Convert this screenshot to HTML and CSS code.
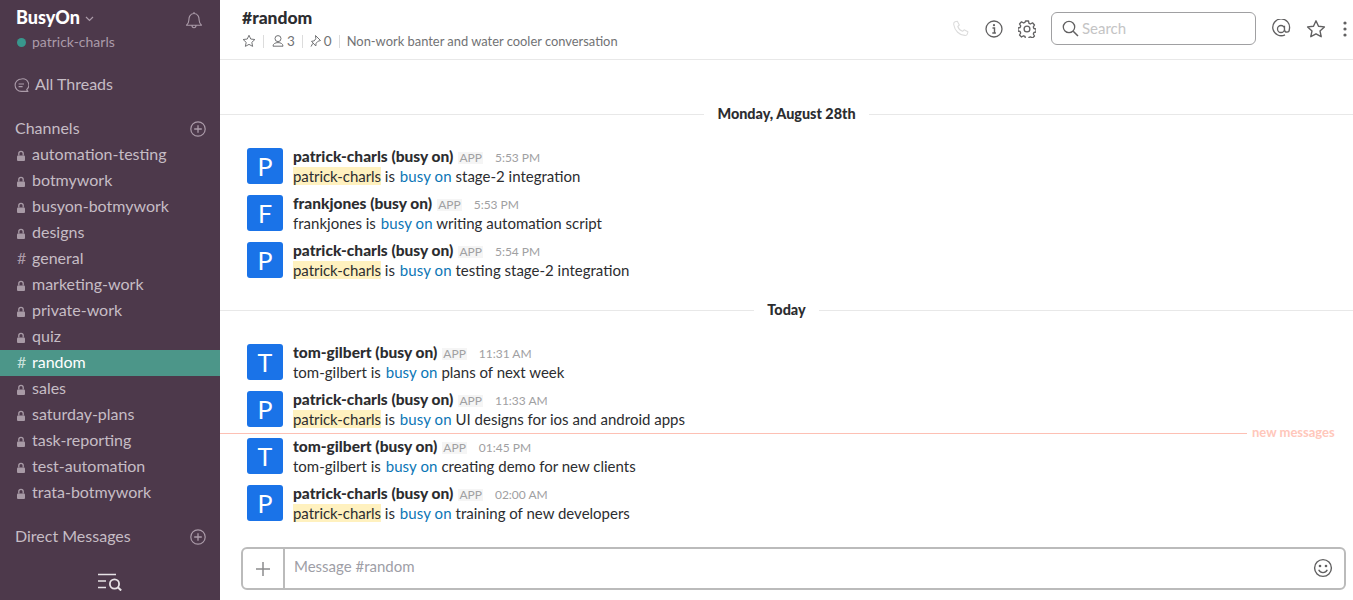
FILE: index.html
```html
<!DOCTYPE html>
<html lang="en">
<head>
<meta charset="utf-8">
<title>#random | BusyOn</title>
<link rel="stylesheet" href="styles.css">
</head>
<body class="page">
<svg class="defs" width="0" height="0" aria-hidden="true">
  <symbol id="lock" viewBox="0 0 10 12"><path d="M1.8 6.5V4.6a2.2 2.2 0 0 1 4.400 0v1.900" fill="none" stroke="currentColor" stroke-width="1.300"/><rect x="0" y="6.500" width="8" height="5.500" rx="1" fill="currentColor"/></symbol>
  <symbol id="plus-circle" viewBox="0 0 16 16"><circle cx="8" cy="8" r="7.200" fill="none" stroke="currentColor" stroke-width="1.200"/><path d="M8 4.200v7.600M4.200 8h7.600" fill="none" stroke="currentColor" stroke-width="1.300"/></symbol>
  <symbol id="star" viewBox="0 0 20 20"><path d="M10 1.800l2.500 5.400 5.900.7-4.400 4 1.200 5.800L10 14.800l-5.200 2.900L6 11.900l-4.400-4 5.900-.7z" fill="none" stroke="currentColor" stroke-width="1.400" stroke-linejoin="round"/></symbol>
</svg>
<div class="app">
  <aside class="sidebar">
    <div class="team">
      <div class="team-text">
        <div class="team-name">BusyOn <svg class="chev" width="9" height="6" viewBox="0 0 9 6"><path d="M1 1l3.500 3.500L8 1" fill="none" stroke="currentColor" stroke-width="1.200"/></svg></div>
        <div class="user"><span class="presence"></span>patrick-charls</div>
      </div>
      <svg class="bell" width="18" height="18" viewBox="0 0 18 18"><path d="M1.500 14.200c1.600-1.300 2.200-2.600 2.300-4.800.1-2.200.2-3.200 1-4.500C5.600 3.400 7.200 2.500 9 2.500s3.400.9 4.200 2.400c.8 1.300.9 2.300 1 4.500.1 2.200.7 3.500 2.300 4.800zM7 14.500c0 1.400.9 2.200 2 2.200s2-.8 2-2.200M9 2.500V1" fill="none" stroke="currentColor" stroke-width="1.100" stroke-linejoin="round"/></svg>
    </div>
    <div class="threads">
      <svg class="threads-icon" width="15" height="15" viewBox="0 0 15 15"><path d="M7.300 1a6.200 6.200 0 1 0 0 12.400h6.600l-1.200-1.700A6.200 6.200 0 0 0 7.300 1z" fill="none" stroke="currentColor" stroke-width="1.100" stroke-linejoin="round"/><path d="M4.600 6h5.400M4.600 8.600h4" fill="none" stroke="currentColor" stroke-width="1.100"/></svg>
      All Threads
    </div>
    <div class="section-head"><span>Channels</span><svg class="add" width="16" height="16"><use href="#plus-circle"/></svg></div>
    <ul class="channels">
      <li class="channel"><svg class="ch-lock" width="10" height="12"><use href="#lock"/></svg>automation-testing</li>
      <li class="channel"><svg class="ch-lock" width="10" height="12"><use href="#lock"/></svg>botmywork</li>
      <li class="channel"><svg class="ch-lock" width="10" height="12"><use href="#lock"/></svg>busyon-botmywork</li>
      <li class="channel"><svg class="ch-lock" width="10" height="12"><use href="#lock"/></svg>designs</li>
      <li class="channel"><span class="ch-hash">#</span>general</li>
      <li class="channel"><svg class="ch-lock" width="10" height="12"><use href="#lock"/></svg>marketing-work</li>
      <li class="channel"><svg class="ch-lock" width="10" height="12"><use href="#lock"/></svg>private-work</li>
      <li class="channel"><svg class="ch-lock" width="10" height="12"><use href="#lock"/></svg>quiz</li>
      <li class="channel active"><span class="ch-hash">#</span>random</li>
      <li class="channel"><svg class="ch-lock" width="10" height="12"><use href="#lock"/></svg>sales</li>
      <li class="channel"><svg class="ch-lock" width="10" height="12"><use href="#lock"/></svg>saturday-plans</li>
      <li class="channel"><svg class="ch-lock" width="10" height="12"><use href="#lock"/></svg>task-reporting</li>
      <li class="channel"><svg class="ch-lock" width="10" height="12"><use href="#lock"/></svg>test-automation</li>
      <li class="channel"><svg class="ch-lock" width="10" height="12"><use href="#lock"/></svg>trata-botmywork</li>
    </ul>
    <div class="section-head dm"><span>Direct Messages</span><svg class="add" width="16" height="16"><use href="#plus-circle"/></svg></div>
    <div class="quick">
      <svg width="25" height="18" viewBox="0 0 25 18"><path d="M1 1.500h18M1 8h8M1 14.500h8" fill="none" stroke="currentColor" stroke-width="1.500"/><circle cx="17.500" cy="11" r="4.600" fill="none" stroke="currentColor" stroke-width="1.800"/><path d="M20.800 14.300l3.400 3.200" fill="none" stroke="currentColor" stroke-width="2"/></svg>
    </div>
  </aside>
  <main class="main">
    <header class="header">
      <div class="header-info">
        <div class="title">#random</div>
        <div class="meta">
          <svg class="meta-star" width="14" height="14"><use href="#star"/></svg>
          <span class="sep"></span>
          <svg class="meta-ico" width="14" height="14" viewBox="0 0 14 14"><circle cx="7" cy="4.600" r="3" fill="none" stroke="currentColor" stroke-width="1"/><path d="M2 12.200c0-2.400 2.200-3.600 5-3.600s5 1.200 5 3.600z" fill="none" stroke="currentColor" stroke-width="1" stroke-linejoin="round"/></svg>
          <span class="count">3</span>
          <span class="sep"></span>
          <svg class="meta-ico" width="12" height="14" viewBox="0 0 12 14"><path d="M5.500 1.500l5 5-2.400.7-2 2-.3 2.800-4.300-4.700 2.700-.4 1.600-2.200z" fill="none" stroke="currentColor" stroke-width="1" stroke-linejoin="round"/><path d="M2.800 9.400L1 12.600" fill="none" stroke="currentColor" stroke-width="1"/></svg>
          <span class="count">0</span>
          <span class="sep"></span>
          <span class="topic">Non-work banter and water cooler conversation</span>
        </div>
      </div>
      <div class="tools">
        <svg class="tool phone" width="18" height="18" viewBox="0 0 18 18"><path d="M3 1.800l2.300-.6 2 3.800-1.500 1.500c.6 2 2.700 4.100 4.800 4.800l1.500-1.500 3.800 2-.6 2.300c-.4 1-1.500 1.500-2.600 1.300C7.500 15.400 2.700 10.600 1.700 4.500 1.500 3.300 2 2.200 3 1.800z" fill="none" stroke="currentColor" stroke-width="1.100" stroke-linejoin="round"/></svg>
        <svg class="tool info" width="18" height="18" viewBox="0 0 18 18"><circle cx="9" cy="9" r="8" fill="none" stroke="currentColor" stroke-width="1.300"/><circle cx="9" cy="5.200" r="1.100" fill="currentColor"/><path d="M7.500 8h2v5M7.300 13h3.600" fill="none" stroke="currentColor" stroke-width="1.400"/></svg>
        <svg class="tool gear" width="18" height="18" viewBox="0 0 18 18"><path d="M7.500 1h3l.5 2.300 1.500.7 2-1.200 2 2.200-1.200 1.900.6 1.600 2.100.5v3l-2.100.5-.6 1.500 1.200 2-2 2-2-1.200-1.500.6-.5 2.100h-3L7 16.400l-1.500-.6-2 1.200-2-2 1.200-2-.6-1.500L0 11V8l2.100-.5.6-1.600L1.500 4l2-2.200 2 1.200L7 2.300z" fill="none" stroke="currentColor" stroke-width="1.300" stroke-linejoin="round"/><circle cx="9" cy="9" r="2.900" fill="none" stroke="currentColor" stroke-width="1.300"/></svg>
        <div class="search">
          <svg class="search-ico" width="17" height="17" viewBox="0 0 17 17"><circle cx="7" cy="7" r="5.700" fill="none" stroke="currentColor" stroke-width="1.300"/><path d="M11.200 11.200l4.800 4.800" fill="none" stroke="currentColor" stroke-width="1.500"/></svg>
          <span class="search-text">Search</span>
        </div>
        <svg class="tool at" width="20" height="20" viewBox="0 0 20 20"><path d="M14 15.800A8.400 8.400 0 1 1 18.400 10c0 2-1 3.200-2.500 3.200s-2.400-1.100-2.400-2.700V6.800M13.500 10a3.500 3.500 0 1 1-7 0 3.500 3.500 0 0 1 7 0z" fill="none" stroke="currentColor" stroke-width="1.300"/></svg>
        <svg class="tool starbig" width="20" height="20"><use href="#star"/></svg>
        <svg class="tool dots" width="4" height="16" viewBox="0 0 4 16"><circle cx="2" cy="2" r="1.600" fill="currentColor"/><circle cx="2" cy="8" r="1.600" fill="currentColor"/><circle cx="2" cy="14" r="1.600" fill="currentColor"/></svg>
      </div>
    </header>
    <section class="messages">
      <div class="day first"><span>Monday, August 28th</span></div>
      <article class="msg"><div class="avatar">P</div><div class="msg-body"><div class="line1"><b class="name">patrick-charls (busy on)</b><span class="app-tag">APP</span><time class="time">5:53 PM</time></div><div class="text"><mark class="hl">patrick-charls</mark> is <a class="link">busy on</a> stage-2 integration</div></div></article>
      <article class="msg"><div class="avatar">F</div><div class="msg-body"><div class="line1"><b class="name">frankjones (busy on)</b><span class="app-tag">APP</span><time class="time">5:53 PM</time></div><div class="text">frankjones is <a class="link">busy on</a> writing automation script</div></div></article>
      <article class="msg"><div class="avatar">P</div><div class="msg-body"><div class="line1"><b class="name">patrick-charls (busy on)</b><span class="app-tag">APP</span><time class="time">5:54 PM</time></div><div class="text"><mark class="hl">patrick-charls</mark> is <a class="link">busy on</a> testing stage-2 integration</div></div></article>
      <div class="day"><span>Today</span></div>
      <article class="msg"><div class="avatar">T</div><div class="msg-body"><div class="line1"><b class="name">tom-gilbert (busy on)</b><span class="app-tag">APP</span><time class="time">11:31 AM</time></div><div class="text">tom-gilbert is <a class="link">busy on</a> plans of next week</div></div></article>
      <article class="msg"><div class="avatar">P</div><div class="msg-body"><div class="line1"><b class="name">patrick-charls (busy on)</b><span class="app-tag">APP</span><time class="time">11:33 AM</time></div><div class="text"><mark class="hl">patrick-charls</mark> is <a class="link">busy on</a> UI designs for ios and android apps</div></div></article>
      <article class="msg new-divider"><div class="avatar">T</div><div class="msg-body"><div class="line1"><b class="name">tom-gilbert (busy on)</b><span class="app-tag">APP</span><time class="time">01:45 PM</time></div><div class="text">tom-gilbert is <a class="link">busy on</a> creating demo for new clients</div></div><div class="new-line"><span>new messages</span></div></article>
      <article class="msg"><div class="avatar">P</div><div class="msg-body"><div class="line1"><b class="name">patrick-charls (busy on)</b><span class="app-tag">APP</span><time class="time">02:00 AM</time></div><div class="text"><mark class="hl">patrick-charls</mark> is <a class="link">busy on</a> training of new developers</div></div></article>
    </section>
    <div class="composer">
      <div class="composer-add"><svg width="16" height="16" viewBox="0 0 16 16"><path d="M8 1v14M1 8h14" fill="none" stroke="currentColor" stroke-width="1.500"/></svg></div>
      <div class="composer-input">Message #random</div>
      <svg class="smile" width="20" height="20" viewBox="0 0 20 20"><circle cx="10" cy="10" r="8.400" fill="none" stroke="currentColor" stroke-width="1.400"/><circle cx="7" cy="8" r="1.300" fill="currentColor"/><circle cx="13" cy="8" r="1.300" fill="currentColor"/><path d="M5.700 11.800c1 2 2.500 2.800 4.300 2.800s3.300-.8 4.300-2.800" fill="none" stroke="currentColor" stroke-width="1.400"/></svg>
    </div>
  </main>
</div>
</body>
</html>
```
FILE: styles.css
```css
* { box-sizing: border-box; }
html { margin: 0; padding: 0; height: 600px; background: #fff; overflow: hidden; }
body.page { margin: 0; padding: 0; height: 600px; font-family: Lato, "Liberation Sans", sans-serif; color: #2c2d30; background: #fff; overflow: hidden; }
.defs { position: absolute; }
.app { display: flex; width: 1353px; height: 600px; background: #fff; }

.sidebar { width: 220px; flex: none; background: #4d394b; color: #ab9ba9; display: flex; flex-direction: column; position: relative; }
.team { display: flex; justify-content: space-between; height: 57px; padding: 6px 17px 0 16px; flex: none; }
.team-name { color: #fff; font-size: 18px; font-weight: 900; line-height: 22px; display: flex; align-items: center; gap: 5px; }
.chev { margin-top: 3px; color: #ab9ba9; }
.user { display: flex; align-items: center; font-size: 14px; line-height: 20px; margin-top: 4px; }
.presence { width: 9px; height: 9px; border-radius: 50%; background: #38978d; margin: 0 6px 0 1px; }
.bell { margin-top: 5px; color: #ab9ba9; }
.threads { display: flex; align-items: center; height: 26px; margin-top: 15px; padding: 0 0 4px 14px; font-size: 16px; color: #c6bdc5; gap: 6px; flex: none; }
.threads-icon { margin-top: 4px; color: #ab9ba9; }
.section-head { display: flex; justify-content: space-between; align-items: center; height: 26px; margin-top: 18px; padding: 0 14px 4px 15px; font-size: 16px; color: #c6bdc5; flex: none; }
.add { color: #ab9ba9; margin-top: 4px; }
.channels { list-style: none; margin: 0; padding: 0; flex: none; }
.channel { display: flex; align-items: center; height: 26px; padding: 0 0 4px 17px; font-size: 16px; color: #c6bdc5; }
.ch-lock { width: 10px; flex: none; margin: 4px 5px 0 0; color: #a89aa6; }
.ch-hash { width: 10px; margin-right: 5px; flex: none; color: #ab9ba9; }
.channel.active { background: #4c9689; color: #fff; }
.channel.active .ch-hash { color: #c9e1dc; }
.quick { position: absolute; left: 97px; bottom: 9px; color: #e6e2e5; line-height: 0; }

.main { flex: 1; min-width: 0; display: flex; flex-direction: column; background: #fff; color: #2c2d30; }
.header { height: 60px; flex: none; display: flex; justify-content: space-between; border-bottom: 1px solid #e8e8e8; padding: 0 6px 0 22px; background: #fff; }
.title { font-size: 17.5px; font-weight: 900; line-height: 22px; margin-top: 7px; color: #2c2d30; }
.meta { display: flex; align-items: center; height: 20px; margin-top: 2px; font-size: 13px; color: #717274; }
.meta-star { color: #717274; }
.sep { width: 1px; height: 13px; background: #dcdcdc; margin: 0 7px; }
.meta-ico { margin-right: 2px; }
.count { font-size: 13.5px; }
.topic { font-size: 12.9px; }
.tools { display: flex; align-items: center; color: #616061; padding-bottom: 2px; }
.tool { flex: none; }
.phone { color: #dcdcdc; margin-right: 15px; }
.info { margin-right: 15px; }
.gear { margin-right: 15px; }
.search { width: 205px; height: 33px; border: 1px solid #a0a0a2; border-radius: 6px; display: flex; align-items: center; padding-left: 10px; margin-right: 15px; gap: 3px; }
.search-ico { color: #616061; }
.search-text { color: #c4c4c5; font-size: 15px; margin-bottom: 2px; }
.at { margin-right: 15px; }
.starbig { margin-right: 17px; }

.messages { flex: 1; min-height: 0; background: #fff; }
.day { height: 20px; display: flex; align-items: center; font-size: 14.4px; font-weight: 900; color: #2c2d30; margin: 11px 0 24px; }
.day.first { margin-top: 44px; }
.day::before, .day::after { content: ""; flex: 1; height: 1px; background: #e8e8e8; }
.day span { padding: 0 13px 2px; background: #fff; color: #2c2d30; }
.msg { display: flex; height: 47px; padding-left: 27px; position: relative; }
.avatar { width: 36px; height: 36px; flex: none; border-radius: 3px; background: #1a73e8; color: #fff; font-size: 25px; line-height: 36px; text-align: center; }
.msg-body { margin-left: 10px; margin-top: -2px; }
.line1 { display: flex; align-items: baseline; height: 20px; line-height: 20px; }
.name { font-size: 15.5px; font-weight: 900; color: #2c2d30; }
.app-tag { font-size: 12px; color: #a0a0a2; background: #f5f5f5; padding: 0 1px; margin-left: 5px; line-height: 12px; }
.time { font-size: 12px; color: #a0a0a2; margin-left: 12px; }
.text { font-size: 15px; line-height: 20px; color: #2c2d30; }
.hl { background: #fff1bf; color: #2c2d30; letter-spacing: -0.05px; }
.link { color: #0b76b6; letter-spacing: 0.1px; margin-left: 1px; }
.new-line { position: absolute; left: 0; right: 0; top: -5px; height: 1px; background: #fdc0b4; margin-right: 106px; }
.new-line span { position: absolute; left: 100%; top: -9px; margin-left: 5px; white-space: nowrap; color: #ffc7bb; font-size: 13px; font-weight: 700; line-height: 16px; }

.composer { flex: none; height: 43px; margin: 0 7px 10px 21px; border: 2px solid #bbb; border-radius: 6px; display: flex; align-items: center; background: #fff; }
.composer-add { width: 42px; height: 100%; flex: none; border-right: 2px solid #bbb; display: flex; align-items: center; justify-content: center; color: #8c8c8d; }
.composer-input { flex: 1; padding-left: 9px; font-size: 15px; color: #9e9ea6; margin-bottom: 6px; }
.smile { margin: 0 11px 2px 0; color: #616061; }
```
